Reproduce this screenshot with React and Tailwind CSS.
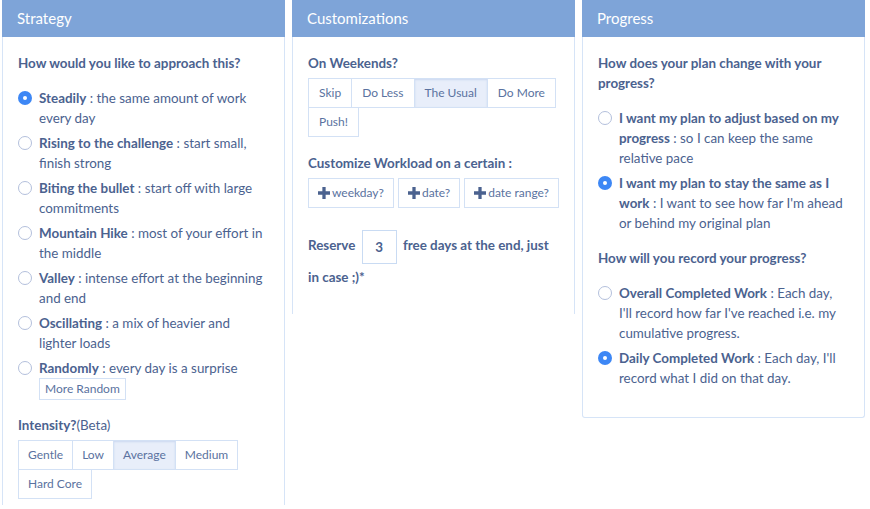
import React from 'react';

const Radio = ({ checked }) =>
  checked ? (
    <span className="mt-[3px] flex h-[14px] w-[14px] shrink-0 items-center justify-center rounded-full bg-[#3d87f5]">
      <span className="h-[4px] w-[4px] rounded-full bg-white" />
    </span>
  ) : (
    <span className="mt-[3px] h-[14px] w-[14px] shrink-0 rounded-full border border-[#b3bfdc] bg-white" />
  );

const Option = ({ checked, title, text, children }) => (
  <div className="mb-[5px] flex gap-[7px]">
    <Radio checked={checked} />
    <div>
      <div>
        <span className="font-bold">{title}</span> : {text}
      </div>
      {children}
    </div>
  </div>
);

const Btn = ({ children, active, className = '' }) => (
  <button
    className={`border border-[#d3e1f5] text-[12px] text-[#5a72a0] ${
      active ? 'bg-[#e8eefa] shadow-[inset_0_1px_2px_rgba(120,150,210,0.25)]' : 'bg-white'
    } ${className}`}
  >
    {children}
  </button>
);

const Panel = ({ title, className = '', bodyClass = '', children }) => (
  <div className={`flex w-[283px] flex-col ${className}`}>
    <div className="h-[37px] bg-[#7ea4d8] px-[15px] text-[15px] leading-[37px] text-white">{title}</div>
    <div className={`flex-1 border-x border-[#d6e4f7] px-[15px] pt-[16px] ${bodyClass}`}>{children}</div>
  </div>
);

const Plus = () => (
  <svg width="12" height="12" viewBox="0 0 11 11" className="mr-[2px]">
    <path d="M4 0h3v4h4v3H7v4H4V7H0V4h4z" fill="#4b628f" />
  </svg>
);

export default function App() {
  return (
    <div
      className="flex h-[509px] items-start gap-[7px] overflow-hidden bg-white pl-[2px] text-[13.4px] leading-[20px] text-[#4b628f]"
      style={{ fontFamily: 'Lato, "Open Sans", sans-serif' }}
    >
      <Panel title="Strategy" className="h-[505px]">
        <div className="mb-[15px] font-bold">How would you like to approach this?</div>
        <Option checked title="Steadily" text="the same amount of work every day" />
        <Option title="Rising to the challenge" text="start small, finish strong" />
        <Option title="Biting the bullet" text="start off with large commitments" />
        <Option title="Mountain Hike" text="most of your effort in the middle" />
        <Option title="Valley" text="intense effort at the beginning and end" />
        <Option title="Oscillating" text="a mix of heavier and lighter loads" />
        <Option title="Randomly" text="every day is a surprise">
          <Btn className="h-[22px] px-[5px] text-[11.5px]">More Random</Btn>
        </Option>
        <div className="mt-[15px] mb-[5px]">
          <span className="font-bold">Intensity?</span>(Beta)
        </div>
        <div className="flex flex-wrap">
          <Btn className="h-[30px] px-[9px]">Gentle</Btn>
          <Btn className="-ml-px h-[30px] px-[9px]">Low</Btn>
          <Btn className="-ml-px h-[30px] px-[9px]" active>Average</Btn>
          <Btn className="-ml-px h-[30px] px-[9px]">Medium</Btn>
        </div>
        <Btn className="-mt-px h-[30px] px-[9px]">Hard Core</Btn>
      </Panel>

      <Panel title="Customizations" className="h-[314px]">
        <div className="mb-[5px] font-bold">On Weekends?</div>
        <div className="flex">
          <Btn className="h-[30px] px-[10px]">Skip</Btn>
          <Btn className="-ml-px h-[30px] px-[10px]">Do Less</Btn>
          <Btn className="-ml-px h-[30px] px-[10px]" active>The Usual</Btn>
          <Btn className="-ml-px h-[30px] px-[10px]">Do More</Btn>
        </div>
        <Btn className="-mt-px h-[30px] px-[10px]">Push!</Btn>
        <div className="mt-[16px] mb-[5px] font-bold">Customize Workload on a certain :</div>
        <div className="flex gap-[4px]">
          <Btn className="flex h-[30px] items-center px-[9px]"><Plus />weekday?</Btn>
          <Btn className="flex h-[30px] items-center px-[9px]"><Plus />date?</Btn>
          <Btn className="flex h-[30px] items-center px-[9px]"><Plus />date range?</Btn>
        </div>
        <div className="mt-[22px] font-bold leading-[26px]">
          Reserve{' '}
          <span className="mx-[3px] inline-block h-[34px] w-[35px] border border-[#c9dbf3] text-center align-middle leading-[32px]">3</span>{' '}
          free days at the end, just in case ;)*
        </div>
      </Panel>

      <Panel title="Progress" className="h-[418px]" bodyClass="border-b rounded-b-[3px]">
        <div className="mb-[15px] font-bold">How does your plan change with your progress?</div>
        <Option
          title="I want my plan to adjust based on my progress"
          text="so I can keep the same relative pace"
        />
        <Option
          checked
          title="I want my plan to stay the same as I work"
          text="I want to see how far I'm ahead or behind my original plan"
        />
        <div className="mt-[15px] mb-[15px] font-bold">How will you record your progress?</div>
        <Option
          title="Overall Completed Work"
          text={<>Each day,<br />I'll record how far I've reached i.e. my cumulative progress.</>}
        />
        <Option checked title="Daily Completed Work" text="Each day, I'll record what I did on that day." />
      </Panel>
    </div>
  );
}
